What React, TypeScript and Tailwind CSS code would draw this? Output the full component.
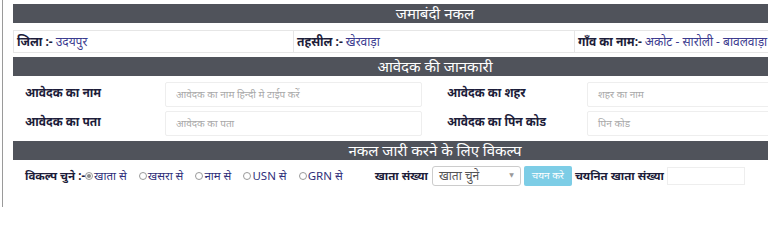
import React from 'react';

const font = { fontFamily: '"Noto Sans", "DejaVu Sans", "Liberation Sans", sans-serif' };

const Header = ({ title }: { title: string }) => (
  <div className="h-[19px] bg-[#50535b] flex items-center justify-center text-white text-[15px] leading-none">
    {title}
  </div>
);

const Radio = ({ label, checked }: { label: string; checked?: boolean }) => (
  <label className="flex items-center mr-[12px] text-[#2f2f7a]">
    <span className="w-[8px] h-[8px] rounded-full border border-[#9a9a9a] flex items-center justify-center bg-white">
      {checked && <span className="w-[4px] h-[4px] rounded-full bg-[#8a8a8a]" />}
    </span>
    <span className="ml-[1px]">{label}</span>
  </label>
);

const FieldRow = ({
  l1, p1, l2, p2,
}: { l1: string; p1: string; l2: string; p2: string }) => (
  <div className="flex h-[29px]">
    <div className="w-[152px] pl-[12px] pt-[2px] text-[12px] font-bold text-[#1d1d3a]">{l1}</div>
    <div className="w-[268px] pr-[11px]">
      <div className="h-[25px] border border-[#eeeeee] rounded-[2px] pl-[10px] flex items-center text-[10px] text-[#a8a8a8]">{p1}</div>
    </div>
    <div className="w-[154px] pl-[14px] pt-[2px] text-[12px] font-bold text-[#1d1d3a]">{l2}</div>
    <div className="w-[270px] pr-[11px]">
      <div className="h-[25px] border border-[#eeeeee] rounded-[2px] pl-[10px] flex items-center text-[10px] text-[#a8a8a8]">{p2}</div>
    </div>
  </div>
);

export default function App() {
  return (
    <div className="w-[768px] h-[207px] overflow-hidden bg-white pl-[2px]" style={font}>
      <div className="h-full border-l border-[#9a9a9a] pl-[10px] pt-[4px]">
        <div className="w-[844px]">
          <Header title="जमाबंदी नकल" />

          <div className="mt-[7px] h-[23px] border border-[#e6e6e6] flex text-[12px]">
            <div className="w-[280px] border-r border-[#e6e6e6] pl-[3px] flex items-center">
              <span className="font-bold text-[#1d1d3a]">जिला :-</span>
              <span className="ml-[3px] text-[#3b3b8f]">उदयपुर</span>
            </div>
            <div className="w-[281px] border-r border-[#e6e6e6] pl-[3px] flex items-center">
              <span className="font-bold text-[#1d1d3a]">तहसील :-</span>
              <span className="ml-[3px] text-[#3b3b8f]">खेरवाड़ा</span>
            </div>
            <div className="flex-1 pl-[3px] flex items-center">
              <span className="font-bold text-[#1d1d3a]">गाँव का नाम:-</span>
              <span className="ml-[3px] text-[#3b3b8f]">अकोट - सारोली - बावलवाड़ा</span>
            </div>
          </div>

          <div className="mt-[4px]">
            <Header title="आवेदक की जानकारी" />
          </div>

          <div className="pt-[6px]">
            <FieldRow l1="आवेदक का नाम" p1="आवेदक का नाम हिन्दी मे टाईप करें" l2="आवेदक का शहर" p2="शहर का नाम" />
            <FieldRow l1="आवेदक का पता" p1="आवेदक का पता" l2="आवेदक का पिन कोड" p2="पिन कोड" />
          </div>

          <div className="mt-[1px]">
            <Header title="नकल जारी करने के लिए विकल्प" />
          </div>

          <div className="flex items-center h-[30px] text-[11.5px] pt-[1px]">
            <span className="pl-[12px] font-bold text-[#1d1d3a]">विकल्प चुने :-</span>
            <Radio label="खाता से" checked />
            <Radio label="खसरा से" />
            <Radio label="नाम से" />
            <Radio label="USN से" />
            <Radio label="GRN से" />
            <span className="ml-[20px] font-bold text-[#1d1d3a]">खाता संख्या</span>
            <div className="ml-[4px] w-[89px] h-[20px] border border-[#cccccc] rounded-[3px] flex items-center justify-between pl-[6px] pr-[6px] text-[12px] text-[#555555]">
              <span>खाता चुने</span>
              <span className="text-[6px] text-[#999999]">▼</span>
            </div>
            <button className="ml-[3px] w-[48px] h-[20px] rounded-[2px] bg-[#7dcde6] text-white text-[10px]">चयन करे</button>
            <span className="ml-[3px] font-bold text-[#1d1d3a]">चयनित खाता संख्या</span>
            <div className="ml-[3px] w-[78px] h-[18px] border border-[#eeeeee]" />
          </div>
        </div>
      </div>
    </div>
  );
}
